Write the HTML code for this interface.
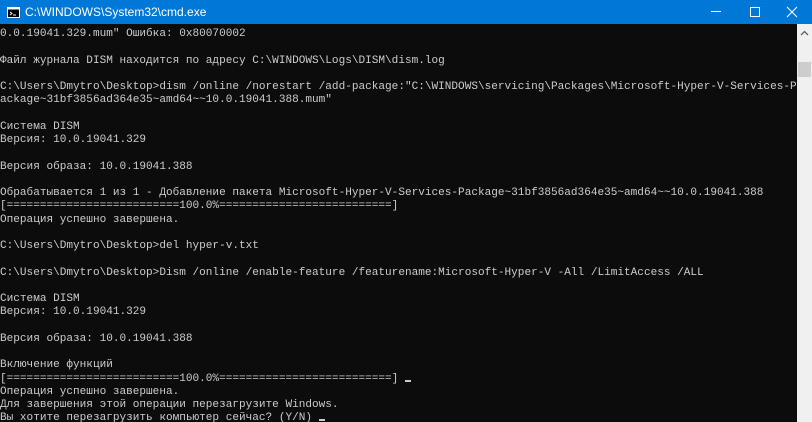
<!DOCTYPE html>
<html><head><meta charset="utf-8"><style>
html,body{margin:0;padding:0;width:812px;height:422px;overflow:hidden;background:#0c0c0c}
#title{position:absolute;left:0;top:0;width:812px;height:24px;background:#0078d7;color:#fff;font:12px "Liberation Sans",sans-serif}
#title .t{position:absolute;left:25px;top:5px}
#con{position:absolute;left:0;top:28px;width:797px;height:394px;overflow:hidden}
pre{margin:0;font-family:"Liberation Mono","DejaVu Sans Mono",monospace;font-size:11.07px;line-height:13.25px;color:#cccccc;white-space:pre}
.cur{display:inline-block;width:6px;height:2px;background:#ccc;vertical-align:-1px}
#sb{position:absolute;left:797px;top:24px;width:15px;height:398px;background:#f0f0f0}
#thumb{position:absolute;left:1px;top:38px;width:13px;height:15px;background:#cdcdcd}
</style></head><body>
<div id="title">
<svg style="position:absolute;left:7px;top:7px" width="13" height="11" viewBox="0 0 13 11"><rect x="0.5" y="0.5" width="12" height="10" fill="#000" stroke="#fff"/><rect x="1" y="1" width="11" height="1.5" fill="#fff"/><path d="M3 5 l2 1.5 l-2 1.5 M6 8 h3" stroke="#fff" fill="none"/></svg>
<span class="t">C:\WINDOWS\System32\cmd.exe</span>
<svg style="position:absolute;left:711px;top:6px" width="100" height="14" viewBox="0 0 100 14"><path d="M0 5.5 h10" stroke="#fff"/><rect x="39.5" y="1.5" width="9" height="9" fill="none" stroke="#fff"/><path d="M76 1 l10 10 M86 1 l-10 10" stroke="#fff"/></svg>
</div>
<div id="con"><pre>0.0.19041.329.mum" Ошибка: 0x80070002

Файл журнала DISM находится по адресу C:\WINDOWS\Logs\DISM\dism.log

C:\Users\Dmytro\Desktop>dism /online /norestart /add-package:"C:\WINDOWS\servicing\Packages\Microsoft-Hyper-V-Services-P
ackage~31bf3856ad364e35~amd64~~10.0.19041.388.mum"

Система DISM
Версия: 10.0.19041.329

Версия образа: 10.0.19041.388

Обрабатывается 1 из 1 - Добавление пакета Microsoft-Hyper-V-Services-Package~31bf3856ad364e35~amd64~~10.0.19041.388
[==========================100.0%==========================]
Операция успешно завершена.

C:\Users\Dmytro\Desktop>del hyper-v.txt

C:\Users\Dmytro\Desktop>Dism /online /enable-feature /featurename:Microsoft-Hyper-V -All /LimitAccess /ALL

Система DISM
Версия: 10.0.19041.329

Версия образа: 10.0.19041.388

Включение функций
[==========================100.0%==========================] <span class="cur"></span>
Операция успешно завершена.
Для завершения этой операции перезагрузите Windows.
Вы хотите перезагрузить компьютер сейчас? (Y/N) <span class="cur"></span></pre></div>
<div id="sb"><svg style="position:absolute;left:3px;top:6px" width="9" height="6" viewBox="0 0 9 6"><path d="M1 5 l3.5-3.5 l3.5 3.5" stroke="#606060" stroke-width="1.3" fill="none"/></svg><div id="thumb"></div></div>
</body></html>
